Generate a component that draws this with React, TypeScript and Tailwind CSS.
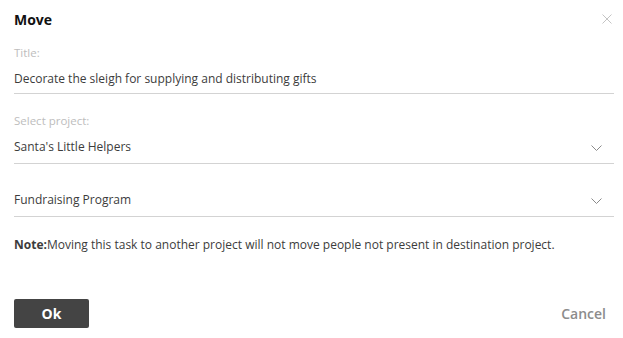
import React from 'react'

const font = { fontFamily: '"Open Sans", "Liberation Sans", sans-serif' }

function Chevron() {
  return (
    <svg width="11" height="6" viewBox="0 0 11 6" className="shrink-0 mt-[9px]">
      <path d="M0.5 0.5 L5.5 5.5 L10.5 0.5" fill="none" stroke="#8a8a8a" strokeWidth="1" />
    </svg>
  )
}

function Field({ label, value, select, h }: { label?: string; value: string; select?: boolean; h: string }) {
  return (
    <div>
      {label && <div className="text-[11.5px] leading-[15px] text-[#bdbdbd] mb-[8px]">{label}</div>}
      <div className={`flex items-start justify-between border-b border-[#d3d3d3] pr-[12px] ${h}`}>
        <span className="pt-[2px] text-[12px] leading-[17px] text-[#3c3c3c]">{value}</span>
        {select && <Chevron />}
      </div>
    </div>
  )
}

export default function App() {
  return (
    <div className="w-[623px] h-[338px] bg-white pl-[14px] pr-[9px] pt-[10px]" style={font}>
      <div className="flex items-center justify-between">
        <h2 className="text-[14px] leading-[19px] font-bold text-[#111]">Move</h2>
        <svg width="10" height="10" viewBox="0 0 10 10" className="mr-[2px] mt-[-2px]">
          <path d="M0.5 0.5 L9.5 9.5 M9.5 0.5 L0.5 9.5" stroke="#c4c4c4" strokeWidth="1" />
        </svg>
      </div>

      <div className="mt-[16px]">
        <Field label="Title:" value="Decorate the sleigh for supplying and distributing gifts" h="h-[26px]" />
      </div>
      <div className="mt-[19px]">
        <Field label="Select project:" value="Santa's Little Helpers" select h="h-[28px]" />
      </div>
      <div className="mt-[25px]">
        <Field value="Fundraising Program" select h="h-[28px]" />
      </div>

      <p className="mt-[19px] text-[12px] leading-[17px] text-[#3c3c3c]">
        <span className="font-bold">Note:</span>Moving this task to another project will not move people not present in destination project.
      </p>

      <div className="mt-[46px] flex items-center justify-between">
        <button className="w-[75px] h-[29px] rounded-[2px] bg-[#444] text-white text-[14px] font-bold">Ok</button>
        <button className="mr-[8px] text-[14px] font-semibold text-[#8c8c8c]">Cancel</button>
      </div>
    </div>
  )
}
